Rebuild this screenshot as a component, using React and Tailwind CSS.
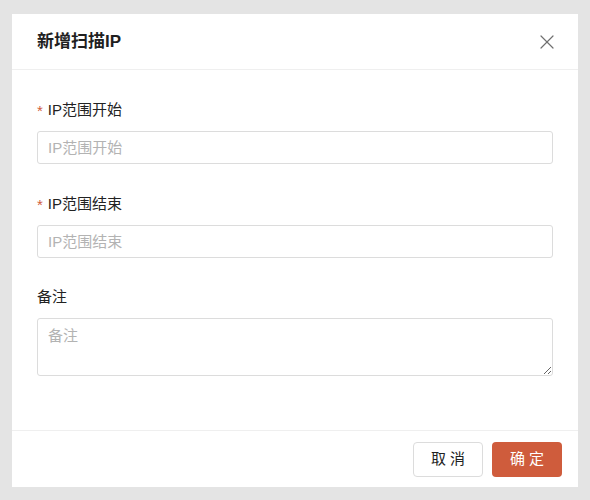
import { X } from "lucide-react";

const font = { fontFamily: '"Liberation Sans", "Noto Sans CJK SC", sans-serif' };

const Field = ({ label, required, placeholder, multiline }) => (
  <div>
    <label className="flex h-[22px] items-center text-[15px] text-[#222]">
      {required && <span className="mr-[5px] mt-[3px] text-[#cf5c3c]">*</span>}
      {label}
    </label>
    {multiline ? (
      <textarea
        placeholder={placeholder}
        className="mt-[10px] block h-[58px] w-full rounded-[3px] border border-[#dcdcdc] px-[10px] py-[6px] text-[15px] outline-none placeholder:text-[#b3b3b3]"
      />
    ) : (
      <input
        placeholder={placeholder}
        className="mt-[10px] block h-[33px] w-full rounded-[3px] border border-[#dcdcdc] px-[10px] text-[15px] outline-none placeholder:text-[#b3b3b3]"
      />
    )}
  </div>
);

export default function App() {
  return (
    <div className="h-[500px] w-[590px] bg-[#e4e4e4] pl-[12px] pt-[14px]" style={font}>
      <div className="flex h-[473px] w-[566px] flex-col bg-white">
        <div className="flex h-[56px] items-center justify-between border-b border-[#efefef] pl-[25px] pr-[19px]">
          <h2 className="text-[17px] font-semibold text-[#1f1f1f]">新增扫描IP</h2>
          <X size={24} strokeWidth={1.2} className="text-[#707070]" />
        </div>
        <div className="flex flex-1 flex-col gap-[29px] pl-[25px] pr-[25px] pt-[29px]">
          <Field label="IP范围开始" required placeholder="IP范围开始" />
          <Field label="IP范围结束" required placeholder="IP范围结束" />
          <div className="-mt-[1px]">
            <Field label="备注" placeholder="备注" multiline />
          </div>
        </div>
        <div className="flex h-[57px] items-center justify-end gap-[9px] border-t border-[#efefef] pr-[16px]">
          <button className="h-[35px] w-[70px] rounded-[4px] border border-[#dcdcdc] bg-white text-[15px] text-[#222]">
            取 消
          </button>
          <button className="h-[35px] w-[70px] rounded-[4px] bg-[#cf5c3c] text-[15px] text-white">
            确 定
          </button>
        </div>
      </div>
    </div>
  );
}
